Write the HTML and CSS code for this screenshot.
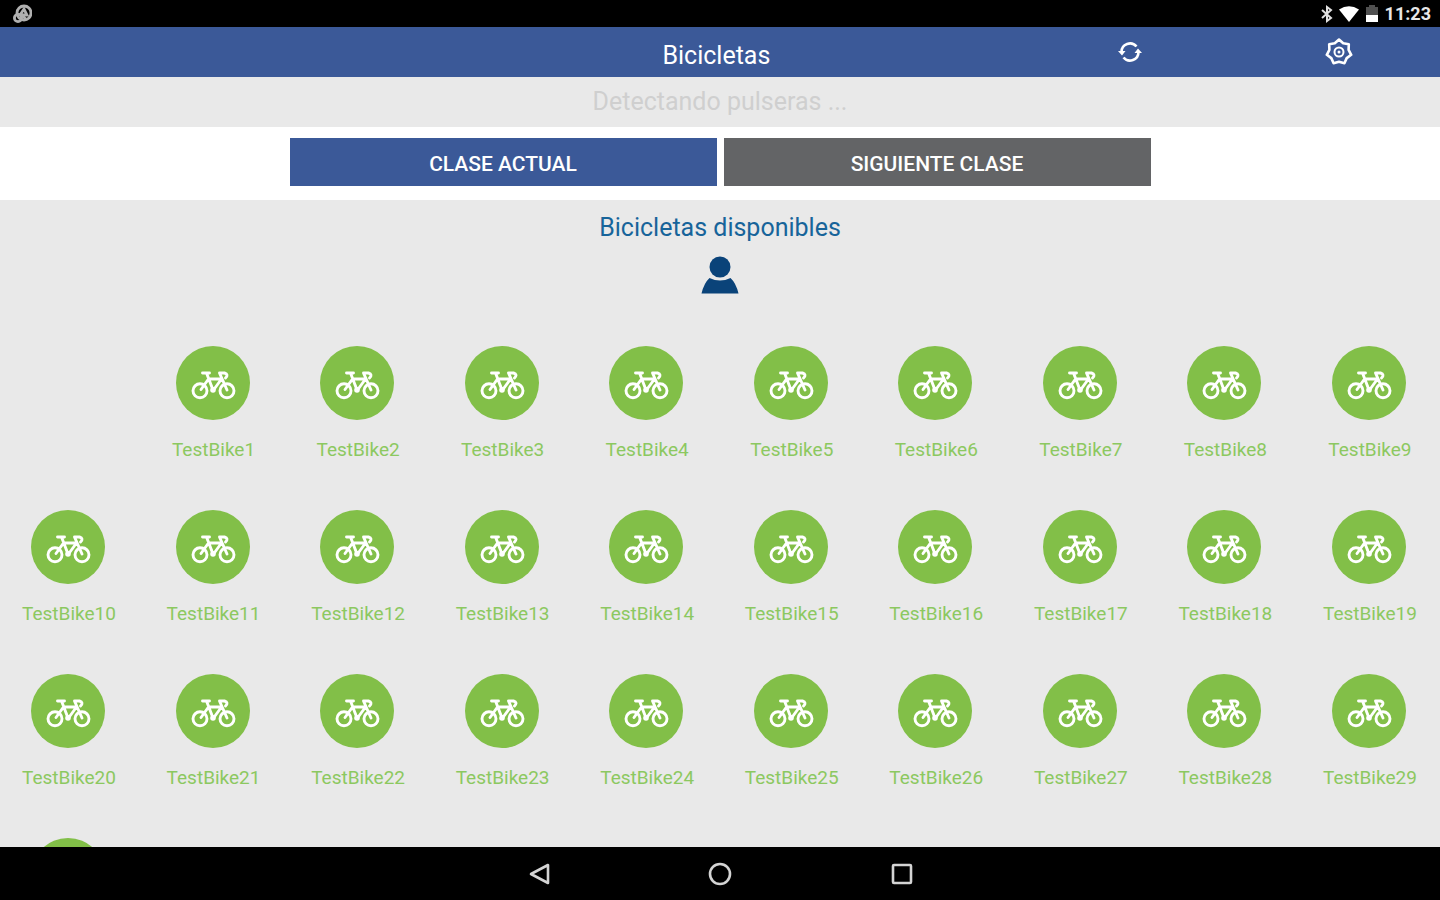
FILE: index.html
```html
<!DOCTYPE html>
<html lang="es">
<head>
    <meta charset="UTF-8">
    <meta name="viewport" content="width=device-width, initial-scale=1.0">
    <title>Bicicletas</title>
    <link rel="stylesheet" href="styles.css">
</head>
<body>
    <svg class="symbols" aria-hidden="true">
        <symbol id="bike" viewBox="0 0 46 30">
            <g fill="none" stroke="#ffffff" stroke-width="2.9" stroke-linejoin="round" stroke-linecap="round">
                <circle cx="10" cy="20.8" r="7"/>
                <circle cx="37" cy="20.8" r="7"/>
                <path d="M12.500 3H19.500M16.500 3L23 20M11 19.500L18.500 9H31.500L23.500 20M29.500 3L37 20M29.500 3H34.500Q39 4.500 35.500 8"/>
            </g>
            <circle cx="23" cy="20" r="2.8" fill="#ffffff"/>
        </symbol>
    </svg>

    <div class="status-bar">
        <svg width="20" height="20" viewBox="0 0 20 20" fill="none" stroke="#b0b0b0" stroke-width="2.8" aria-hidden="true">
            <circle cx="12" cy="9" r="7"/>
            <circle cx="6" cy="14" r="3.6"/>
            <path d="M8 11L12 5L15 11H9L14 15"/>
        </svg>
        <div class="status-icons">
            <svg width="12" height="18" viewBox="0 0 12 18" fill="none" stroke="#e0e0e0" stroke-width="2" aria-hidden="true">
                <path d="M1 5L10 13L6 16V2L10 5L1 13"/>
            </svg>
            <svg width="20" height="16" viewBox="0 0 20 16" aria-hidden="true">
                <path d="M0 3.500Q10-3 20 3.500L10 16Z" fill="#ffffff"/>
            </svg>
            <svg width="14" height="18" viewBox="0 0 14 18" aria-hidden="true">
                <path d="M4 0H10V2H13V10H1V2H4Z" fill="#505050"/>
                <path d="M1 10H13V17H1Z" fill="#ffffff"/>
            </svg>
            <time>11:23</time>
        </div>
    </div>

    <header>
        <h1>Bicicletas</h1>
        <button class="icon-button" aria-label="Actualizar">
            <svg width="24" height="24" viewBox="0 0 24 24" fill="none" stroke="#ffffff" stroke-width="2.600">
                <path d="M3.500 12A8.500 8.500 0 0 1 18.500 6.500M20.500 12A8.500 8.500 0 0 1 5.500 17.500"/>
                <path d="M0 11H7.500L4 15.500ZM24 13H16.500L20 8.500Z" fill="#ffffff" stroke="none"/>
            </svg>
        </button>
        <button class="icon-button" aria-label="Ajustes">
            <svg width="28" height="28" viewBox="0 0 28 28" fill="none" stroke="#ffffff" stroke-linejoin="round">
                <path stroke-width="2.600" d="M14 1.500L18.200 5.200L23.800 6.200L23.600 11.800L26.200 16.800L21.700 20.100L19.400 25.300L14 23.800L8.600 25.300L6.300 20.100L1.800 16.800L4.400 11.800L4.200 6.200L9.800 5.200Z"/>
                <circle stroke-width="2" cx="14" cy="14" r="4.500"/>
                <circle cx="14" cy="14" r="1.500" fill="#ffffff" stroke="none"/>
            </svg>
        </button>
    </header>

    <p class="notice">Detectando pulseras ...</p>

    <div class="class-tabs">
        <button class="active">CLASE ACTUAL</button>
        <button>SIGUIENTE CLASE</button>
    </div>

    <main>
        <h2>Bicicletas disponibles</h2>
        <svg class="person" width="38" height="38" viewBox="0 0 38 38" fill="#0a4379" aria-hidden="true">
            <circle cx="19" cy="11" r="10.500"/>
            <path d="M0.500 37.500Q3 27 8.500 22Q19 27 29.500 22Q35 27 37.500 37.500Z"/>
        </svg>
        <div class="bikes" id="bikes"></div>
    </main>

    <nav>
        <button aria-label="Atrás">
            <svg width="24" height="26" viewBox="0 0 24 26" fill="none" stroke="#d4d4d4" stroke-width="2.600" stroke-linejoin="round">
                <path d="M21 4V22L4 13Z"/>
            </svg>
        </button>
        <button aria-label="Inicio">
            <svg width="26" height="26" viewBox="0 0 26 26" fill="none" stroke="#d4d4d4" stroke-width="2.600">
                <circle cx="13" cy="13" r="10"/>
            </svg>
        </button>
        <button aria-label="Recientes">
            <svg width="24" height="26" viewBox="0 0 24 26" fill="none" stroke="#d4d4d4" stroke-width="2.600">
                <rect x="4" y="4" width="18" height="18" rx="1"/>
            </svg>
        </button>
    </nav>

    <script>
        const bikes = document.getElementById('bikes');

        for (let i = 1; i <= 30; i++) {
            const bike = document.createElement('button');
            bike.className = 'bike';
            bike.innerHTML = `<span class="bike-circle"><svg width="46" height="30" aria-hidden="true"><use href="#bike"/></svg></span><span class="bike-name">TestBike${i}</span>`;
            bikes.appendChild(bike);
        }
    </script>
</body>
</html>
```
FILE: styles.css
```css
* {
    box-sizing: border-box;
}
body {
    margin: 0;
    height: 100vh;
    display: flex;
    flex-direction: column;
    overflow: hidden;
    font-family: Roboto, sans-serif;
    background-color: #e9e9e9;
}
button {
    border: none;
    padding: 0;
    background: none;
    font-family: inherit;
    cursor: pointer;
}
svg {
    display: block;
}
.symbols {
    display: none;
}
.status-bar {
    flex: none;
    display: flex;
    align-items: center;
    justify-content: space-between;
    height: 27px;
    padding: 0 9px 0 12px;
    background-color: #000000;
    color: #e8e8e8;
}
.status-icons {
    display: flex;
    align-items: center;
    gap: 6px;
}
.status-icons time {
    font-size: 18px;
    font-weight: bold;
}
header {
    flex: none;
    display: grid;
    grid-template-columns: 28.5% 42.5% 15% 1fr;
    align-items: center;
    height: 50px;
    background-color: #3b5998;
    color: #ffffff;
}
h1 {
    grid-column: 2;
    margin: 0;
    padding-top: 7px;
    font-size: 25px;
    font-weight: normal;
    line-height: 32px;
    text-align: center;
}
.icon-button {
    display: flex;
    justify-content: center;
}
.notice {
    flex: none;
    margin: 0;
    font-size: 25px;
    line-height: 50px;
    text-align: center;
    color: #cfcfcf;
}
.class-tabs {
    flex: none;
    display: flex;
    justify-content: center;
    gap: 7px;
    padding: 11px 20px 14px;
    background-color: #ffffff;
}
.class-tabs button {
    flex: 0 1 427px;
    height: 48px;
    padding-top: 4px;
    background-color: #636466;
    color: #ffffff;
    font-size: 21px;
    font-weight: 500;
}
.class-tabs .active {
    background-color: #3b5998;
}
main {
    flex: 1;
    min-height: 0;
    overflow-y: auto;
    scrollbar-width: none;
}
h2 {
    margin: 0;
    padding-top: 12px;
    font-size: 25px;
    font-weight: normal;
    line-height: 32px;
    text-align: center;
    color: #17649a;
}
.person {
    margin: 12px auto 52px;
}
.bikes {
    display: grid;
    grid-template-columns: repeat(10, 96px);
    justify-content: space-between;
    row-gap: 48px;
    padding: 0 23px 0 20px;
}
.bike {
    display: flex;
    flex-direction: column;
    align-items: center;
    gap: 18px;
    color: #8cc860;
    font-size: 19px;
    line-height: 24px;
}
.bike:first-child {
    grid-column-start: 2;
}
.bike-circle {
    display: flex;
    align-items: center;
    justify-content: center;
    width: 74px;
    height: 74px;
    padding-top: 4px;
    border-radius: 50%;
    background-color: #82bf48;
}
.bike-name {
    padding-left: 2px;
}
nav {
    flex: none;
    display: flex;
    align-items: center;
    justify-content: center;
    gap: 156px;
    height: 53px;
    background-color: #000000;
}
```
